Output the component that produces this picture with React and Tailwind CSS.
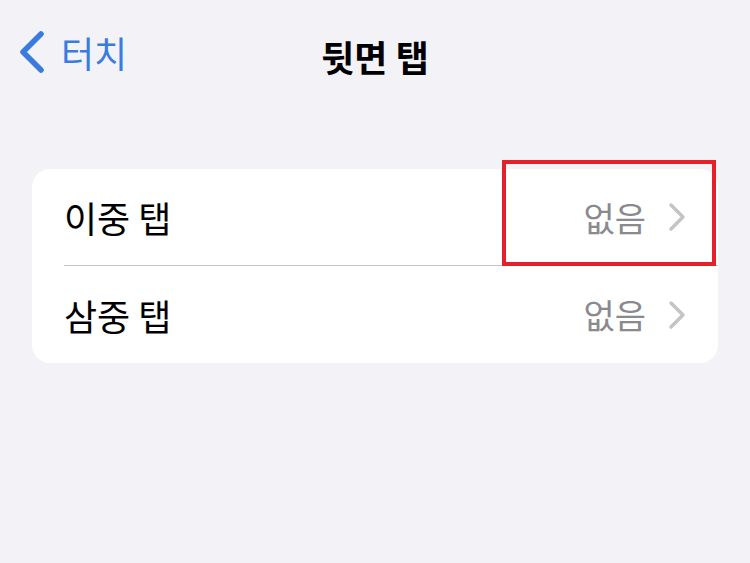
const font = { fontFamily: '"Noto Sans CJK KR", "Noto Sans", sans-serif' };

function Row({ label, value, last }) {
  return (
    <div className="flex h-[97px] items-center pl-8">
      <div
        className={`flex h-full flex-1 items-center pr-8 ${last ? "" : "border-b border-[#c6c6c8]"}`}
      >
        <span className="flex-1 text-[36px] text-black">{label}</span>
        <span className="text-[34px] text-[#8a8a8e]">{value}</span>
        <svg className="ml-[22px]" width="18" height="30" viewBox="0 0 18 30" fill="none">
          <path d="M3 3 L15 15 L3 27" stroke="#c4c4c7" strokeWidth="3.5" strokeLinecap="round" strokeLinejoin="round" />
        </svg>
      </div>
    </div>
  );
}

export default function App() {
  return (
    <div className="relative h-[563px] w-[750px] bg-[#f2f2f7]" style={font}>
      <div className="relative flex h-[106px] items-center pb-[3px]">
        <div className="flex items-center pl-[19px] text-[#3a7bde]">
          <svg width="26" height="42" viewBox="0 0 26 42" fill="none">
            <path d="M22 3 L4 21 L22 39" stroke="currentColor" strokeWidth="5.5" strokeLinecap="round" strokeLinejoin="round" />
          </svg>
          <span className="ml-[16px] text-[36px]">터치</span>
        </div>
        <div className="absolute inset-0 flex items-center justify-center pt-[6px] text-[36px] font-bold text-black">
          뒷면 탭
        </div>
      </div>

      <div className="mx-8 mt-[63px] overflow-hidden rounded-[18px] bg-white">
        <Row label="이중 탭" value="없음" />
        <Row label="삼중 탭" value="없음" last />
      </div>

      <div className="absolute left-[502px] top-[160px] h-[106px] w-[214px] border-4 border-[#e3202b]" />
    </div>
  );
}
